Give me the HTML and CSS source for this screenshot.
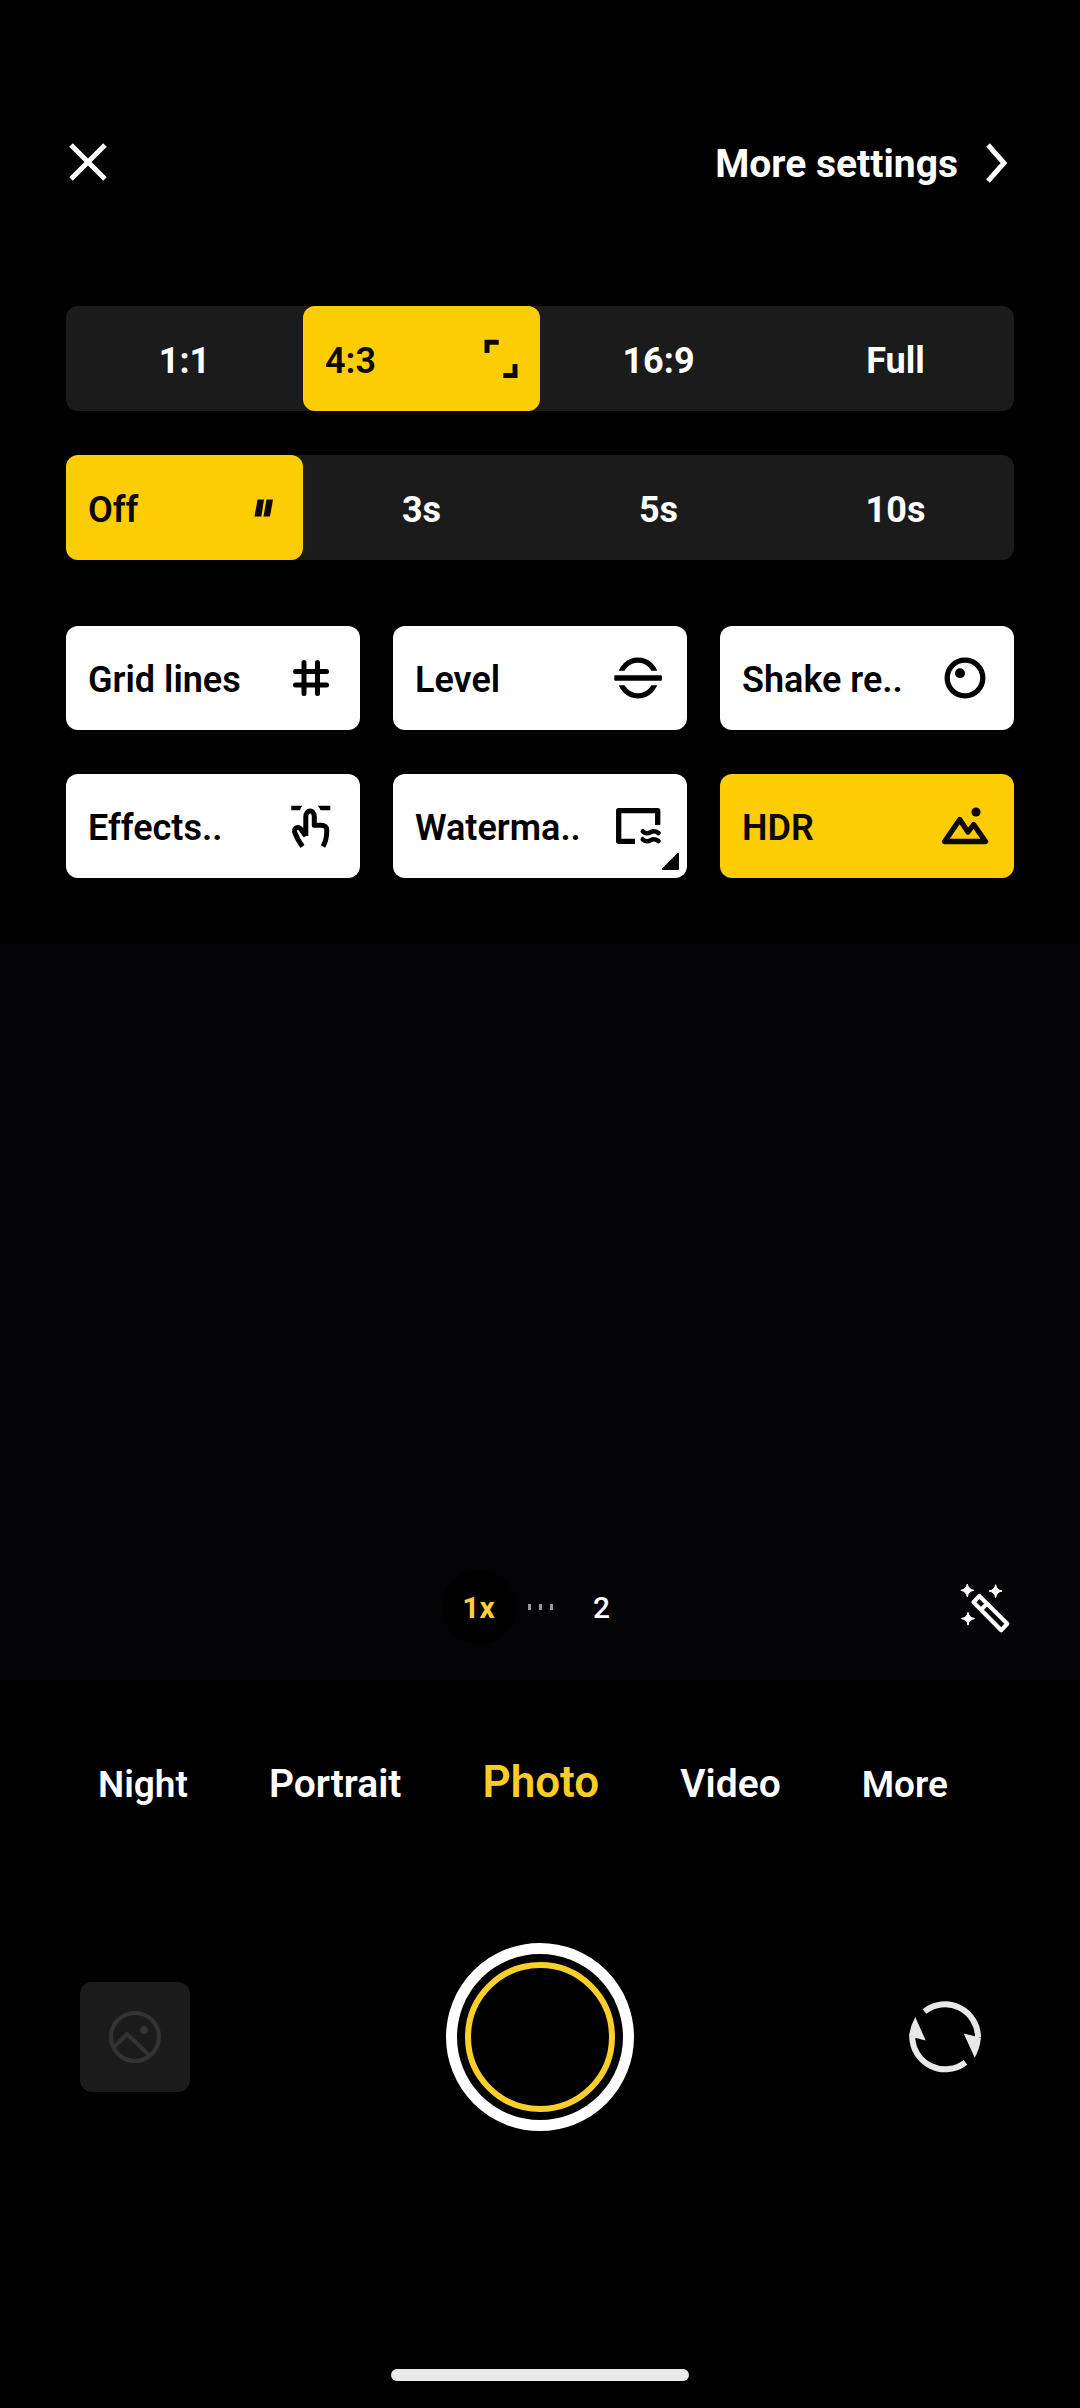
FILE: index.html
```html
<!DOCTYPE html>
<html lang="en">
<head>
<meta charset="utf-8">
<meta name="viewport" content="width=device-width, initial-scale=1">
<title>Camera</title>
<link rel="stylesheet" href="styles.css">
</head>
<body>
<main class="camera">
  <section class="settings">
    <header class="topbar">
      <button class="plain" type="button" aria-label="Close">
        <svg width="44" height="44" viewBox="0 0 44 44" fill="none" stroke="#fff" stroke-width="5"><path d="M5 5 39 39M39 5 5 39"/></svg>
      </button>
      <a class="more-link" href="#"><span class="text">More settings</span>
        <svg width="30" height="44" viewBox="0 0 30 44" fill="none" stroke="#fff" stroke-width="5"><path d="M4 5 20 23 4 41"/></svg>
      </a>
    </header>

    <div class="options">
      <div class="segments" role="radiogroup" aria-label="Aspect ratio">
        <label class="segment"><input type="radio" name="ratio"><span class="text">1:1</span></label>
        <label class="segment"><input type="radio" name="ratio" checked><span class="text">4:3</span>
          <svg class="icon" viewBox="0 0 50 50" fill="none" stroke="#0d0800" stroke-width="5"><path d="M11 19V8.200H22.700M39 30V41.500H27.300"/></svg>
        </label>
        <label class="segment"><input type="radio" name="ratio"><span class="text">16:9</span></label>
        <label class="segment"><input type="radio" name="ratio"><span class="text">Full</span></label>
      </div>
      <div class="segments" role="radiogroup" aria-label="Timer">
        <label class="segment"><input type="radio" name="timer" checked><span class="text">Off</span>
          <svg class="icon" viewBox="0 0 50 50" fill="#0d0800"><path d="M18.500 16.500H25L22.300 33.500H15.500ZM27.500 16.500H34L31 33.500H24.500Z"/></svg>
        </label>
        <label class="segment"><input type="radio" name="timer"><span class="text">3s</span></label>
        <label class="segment"><input type="radio" name="timer"><span class="text">5s</span></label>
        <label class="segment"><input type="radio" name="timer"><span class="text">10s</span></label>
      </div>
    </div>

    <div class="tiles">
      <button class="tile" type="button" aria-pressed="false"><span class="text">Grid lines</span>
        <svg class="icon" viewBox="0 0 50 50" fill="none" stroke="#000" stroke-width="5" stroke-linecap="round"><path d="M18 9.500V40.500M31.500 9.500V40.500M9.500 18.500H40.500M9.500 32H40.500"/></svg>
      </button>
      <button class="tile" type="button" aria-pressed="false"><span class="text">Level</span>
        <svg class="icon" viewBox="0 0 50 50" fill="none" stroke="#000" stroke-width="5.300"><clipPath id="halves"><path d="M0 0H50V17.700H0ZM0 32.300H50V50H0Z"/></clipPath><circle cx="25" cy="25" r="17.800" clip-path="url(#halves)"/><rect x="1.300" y="22.300" width="47.600" height="5.400" rx="1" fill="#000" stroke="none"/></svg>
      </button>
      <button class="tile" type="button" aria-pressed="false"><span class="text">Shake re..</span>
        <svg class="icon" viewBox="0 0 50 50"><circle cx="25" cy="25" r="17.800" fill="none" stroke="#000" stroke-width="5.300"/><circle cx="20" cy="20.300" r="5"/></svg>
      </button>
      <button class="tile" type="button" aria-pressed="false"><span class="text">Effects..</span>
        <svg class="icon" viewBox="0 0 50 50" fill="none" stroke="#000" stroke-width="5" stroke-linejoin="round"><path d="M19.800 35V16C19.800 8 28.300 8 28.300 16V24.300H35.500C38.500 24.300 40.800 26 40.800 29C40.800 36 40.300 40 37 45.500M19.800 35 15.500 29C12 24 7 27.500 9 32C10.500 36 13 41 16.500 45.500"/><path d="M5.300 4.700H16.500C15 6 14.500 7.500 14 9.300H5.300ZM44.300 4.700H31.500C33 6 34 7.500 34.500 9.300H44.300Z" fill="#000" stroke="none"/></svg>
      </button>
      <button class="tile" type="button" aria-pressed="false"><span class="text">Waterma..</span>
        <svg class="icon" viewBox="0 0 50 50" fill="none" stroke="#000" stroke-width="5.300" stroke-linejoin="round"><path d="M44.700 24V9.700H5.700V40.300H22"/><g stroke-width="4.600" stroke-linecap="round"><path d="M29.800 30.300C33 33.500 35.500 32.500 38 31S42.500 30 45.500 32"/><path d="M29.800 38.300C33 41.500 35.500 40.500 38 39S42.500 38 45.500 40"/></g></svg>
        <svg class="corner" viewBox="0 0 17 17"><path d="M16 1V16H1Z" stroke="#000" stroke-width="2" stroke-linejoin="round"/></svg>
      </button>
      <button class="tile" type="button" aria-pressed="true"><span class="text">HDR</span>
        <svg class="icon" viewBox="0 0 50 50" fill="none" stroke="#0d0800" stroke-width="5.300" stroke-linejoin="round"><path d="M4.700 40.500 19.700 18.500 28 31 33.700 23.500 45.500 40.500Z"/><circle cx="36" cy="11" r="4.600" fill="#0d0800" stroke="none"/></svg>
      </button>
    </div>
  </section>

  <section class="viewfinder" aria-label="Viewfinder">
    <div class="zoom">
      <button class="zoom-step current" type="button">1x</button>
      <span class="ticks"><i></i><i></i><i></i></span>
      <button class="zoom-step" type="button">2</button>
    </div>
    <button class="plain beauty" type="button" aria-label="Beauty effects">
      <svg width="52" height="52" viewBox="0 0 52 52"><g fill="#fff" stroke="#fff"><path id="star" d="M7.300 0Q8.300 5.300 13.800 6.300Q8.300 7.300 7.300 12.800Q6.300 7.300 .8 6.300Q6.300 5.300 7.300 0Z"/><use href="#star" x="28.300" y=".7"/><use href="#star" x=".7" y="28.300"/></g><path d="M19.300 12 13.500 18.200 41.200 46.200 47.300 39.800ZM20.500 26 27.500 19.500" fill="none" stroke="#fff" stroke-width="4.200" stroke-linejoin="round"/></svg>
    </button>
  </section>

  <nav class="modes" aria-label="Camera mode">
    <button class="mode far" type="button">Night</button>
    <button class="mode" type="button">Portrait</button>
    <button class="mode active" type="button" aria-current="true">Photo</button>
    <button class="mode" type="button">Video</button>
    <button class="mode far" type="button">More</button>
  </nav>

  <div class="controls">
    <button class="gallery" type="button" aria-label="Gallery">
      <svg width="54" height="54" viewBox="-27 -27 54 54" fill="none" stroke="#333" stroke-width="4"><circle r="24"/><path d="M-22 11-8-3 15 19"/><circle cx="9" cy="-7" r="4" fill="#333" stroke="none"/></svg>
    </button>
    <button class="shutter" type="button" aria-label="Take photo"><span class="shutter-ring"></span></button>
    <button class="plain switch" type="button" aria-label="Switch camera">
      <svg width="74" height="74" viewBox="18 19.700 74 74"><path d="M34.500 31.200A33 33 0 0 1 88 57M75.500 82A33 33 0 0 1 22.200 56" fill="none" stroke="#e8e8e8" stroke-width="6"/><path d="M73.700 53.300 91 57.500Q90 68 84.700 77.500ZM25.300 36.700 35.700 60.300 19 56Q20 46 25.300 36.700Z" fill="#e8e8e8"/></svg>
    </button>
  </div>
  <div class="home-bar"></div>
</main>
</body>
</html>
```
FILE: styles.css
```css
* {
  box-sizing: border-box;
}

body {
  margin: 0;
  background: #000;
  color: #fff;
  font-family: Roboto, "Liberation Sans", sans-serif;
  font-weight: 600;
}

button {
  margin: 0;
  padding: 0;
  border: 0;
  background: none;
  color: inherit;
  font: inherit;
}

svg {
  display: block;
  flex: none;
}

.camera {
  display: flex;
  flex-direction: column;
  min-height: 100vh;
}

.settings {
  padding: 132px 66px 66px;
}

.text {
  padding-top: 4px;
}

.topbar {
  display: flex;
  align-items: center;
  justify-content: space-between;
  height: 60px;
}

.more-link {
  display: flex;
  align-items: center;
  gap: 26px;
  color: inherit;
  font-size: 39px;
  font-weight: 700;
  line-height: 48px;
  text-decoration: none;
}

.options {
  display: grid;
  gap: 44px;
  margin-top: 114px;
}

.segments {
  display: grid;
  grid-template-columns: repeat(4, 1fr);
  border-radius: 12px;
  background: #1b1b1b;
}

.segment {
  display: flex;
  align-items: center;
  justify-content: center;
  height: 105px;
  border-radius: 12px;
  font-size: 36px;
  font-weight: 700;
}

.segment input {
  position: absolute;
  opacity: 0;
}

.segment:has(:checked) {
  justify-content: space-between;
  padding: 0 14px 0 22px;
  background: #fdcd03;
  color: #0d0800;
  font-weight: 600;
}

.icon {
  width: 50px;
  height: 50px;
}

.tiles {
  display: grid;
  grid-template-columns: repeat(3, 1fr);
  gap: 44px 33px;
  margin-top: 66px;
}

.tile {
  position: relative;
  display: flex;
  align-items: center;
  justify-content: space-between;
  height: 104px;
  padding: 0 24px 0 22px;
  border-radius: 12px;
  background: #fff;
  color: #000;
  font-size: 36px;
}

.tile[aria-pressed="true"] {
  background: #fdcd03;
  color: #0d0800;
}

.corner {
  position: absolute;
  right: 8px;
  bottom: 8px;
  width: 17px;
  height: 17px;
}

.viewfinder {
  display: grid;
  flex: 1;
  grid-template-columns: 1fr auto 1fr;
  align-items: end;
  min-height: 300px;
  padding: 0 68px 36px;
  background: #030205;
}

.zoom {
  display: flex;
  grid-column: 2;
  align-items: center;
  gap: 12px;
}

.zoom-step {
  width: 74px;
  height: 74px;
  border-radius: 50%;
  font-size: 30px;
  font-weight: 500;
}

.zoom-step.current {
  background: #000;
  color: #f8cf3c;
  font-weight: 700;
}

.ticks {
  display: flex;
  gap: 8px;
}

.ticks i {
  width: 3px;
  height: 6px;
  background: #999;
}

.beauty {
  justify-self: end;
  margin-bottom: 8px;
}

.modes {
  display: flex;
  align-items: baseline;
  gap: 81px;
  padding: 72px 98px 0;
}

.mode {
  font-size: 39px;
  line-height: 60px;
}

.mode.far {
  font-size: 37px;
}

.mode.active {
  color: #f9cc27;
  font-size: 44px;
}

.controls {
  display: grid;
  grid-template-columns: 1fr auto 1fr;
  align-items: center;
  padding: 128px 80px 0;
}

.gallery {
  display: grid;
  place-items: center;
  width: 110px;
  height: 110px;
  border-radius: 12px;
  background: #1b1b1b;
}

.shutter {
  display: grid;
  place-items: center;
  width: 188px;
  height: 188px;
  border: 11px solid #fff;
  border-radius: 50%;
}

.shutter-ring {
  width: 150px;
  height: 150px;
  border: 6px solid #f9cf28;
  border-radius: 50%;
}

.switch {
  justify-self: end;
  margin-right: 18px;
}

.home-bar {
  width: 298px;
  height: 12px;
  margin: 238px auto 27px;
  border-radius: 6px;
  background: #eaeaea;
}
```
